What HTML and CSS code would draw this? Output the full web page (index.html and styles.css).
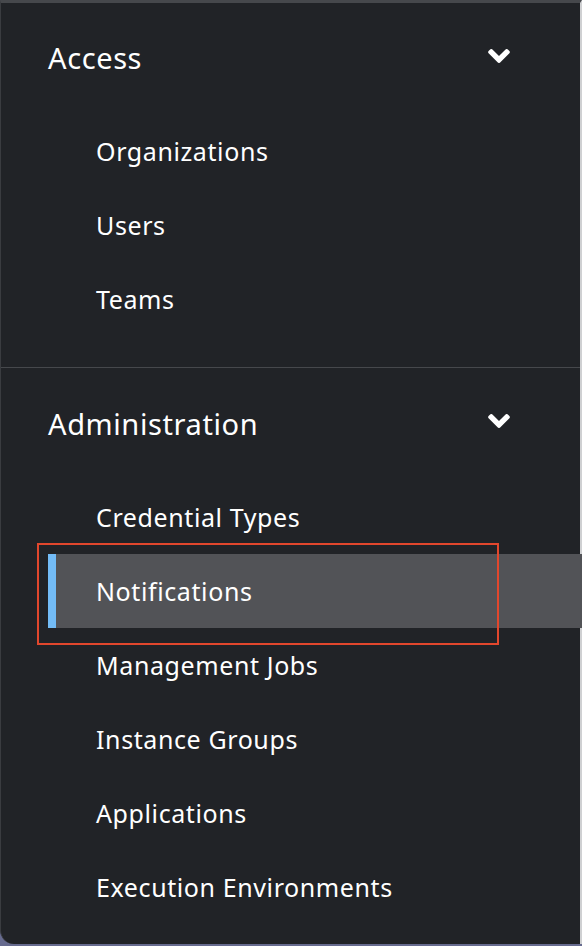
FILE: index.html
```html
<!DOCTYPE html>
<html>
<head>
<meta charset="utf-8">
<link rel="stylesheet" href="styles.css">
</head>
<body>
<nav class="nav">
  <section class="group">
    <div class="group-header">
      <span class="group-title">Access</span>
      <svg class="chevron" viewBox="0 153 320 206" width="22" height="14"><path fill="#fff" d="M143 352.3L7 216.3c-9.4-9.4-9.4-24.6 0-33.9l22.6-22.6c9.4-9.4 24.6-9.4 33.9 0l96.4 96.4 96.4-96.4c9.4-9.4 24.6-9.4 33.9 0l22.6 22.6c9.4 9.4 9.4 24.6 0 33.9l-136 136c-9.2 9.4-24.4 9.4-33.8 0z"/></svg>
    </div>
    <ul class="items">
      <li class="item"><span class="link">Organizations</span></li>
      <li class="item"><span class="link">Users</span></li>
      <li class="item"><span class="link">Teams</span></li>
    </ul>
  </section>
  <section class="group group-second">
    <div class="group-header header-second">
      <span class="group-title">Administration</span>
      <svg class="chevron" viewBox="0 153 320 206" width="22" height="14"><path fill="#fff" d="M143 352.3L7 216.3c-9.4-9.4-9.4-24.6 0-33.9l22.6-22.6c9.4-9.4 24.6-9.4 33.9 0l96.4 96.4 96.4-96.4c9.4-9.4 24.6-9.4 33.9 0l22.6 22.6c9.4 9.4 9.4 24.6 0 33.9l-136 136c-9.2 9.4-24.4 9.4-33.8 0z"/></svg>
    </div>
    <ul class="items">
      <li class="item"><span class="link">Credential Types</span></li>
      <li class="item active"><span class="link">Notifications</span><span class="annot"></span></li>
      <li class="item"><span class="link">Management Jobs</span></li>
      <li class="item"><span class="link">Instance Groups</span></li>
      <li class="item"><span class="link">Applications</span></li>
      <li class="item"><span class="link">Execution Environments</span></li>
    </ul>
  </section>
</nav>
</body>
</html>
```
FILE: styles.css
```css
html, body {
  margin: 0;
  padding: 0;
}
body {
  background: #676b8f;
  width: 582px;
  height: 946px;
  overflow: hidden;
  font-family: "Noto Sans", "Open Sans", sans-serif;
  color: #fff;
}
.nav {
  box-sizing: border-box;
  height: 944px;
  background: #212327;
  border-top: 3px solid #46484c;
  border-left: 1px solid #3a3c40;
  border-right: 2px solid #cfd0d2;
  border-bottom-left-radius: 14px;
}
.group {
  padding-bottom: 31px;
  border-bottom: 1px solid #46484c;
}
.group-second {
  border-bottom: none;
  padding-bottom: 0;
}
.group-header {
  height: 111px;
  display: flex;
  align-items: center;
  justify-content: space-between;
  padding: 0 70px 0 47px;
}
.header-second {
  height: 112px;
}
.group-title {
  font-size: 29px;
  letter-spacing: 0.6px;
  line-height: 1;
  margin-top: -2px;
}
.chevron {
  display: block;
  margin-top: -6px;
}
.items {
  list-style: none;
  margin: 0;
  padding: 0 0 0 47px;
}
.item {
  position: relative;
  height: 74px;
  display: flex;
  align-items: center;
  font-size: 25px;
  letter-spacing: 0.6px;
}
.link {
  padding-left: 48px;
}
.item.active {
  background: #525357;
  margin-right: -2px;
}
.item.active .link {
  border-left: 8px solid #73bcf7;
  padding-left: 40px;
  height: 74px;
  display: flex;
  align-items: center;
}
.annot {
  position: absolute;
  left: -11px;
  top: -11px;
  width: 458px;
  height: 98px;
  border: 2px solid #e2472d;
}
```
